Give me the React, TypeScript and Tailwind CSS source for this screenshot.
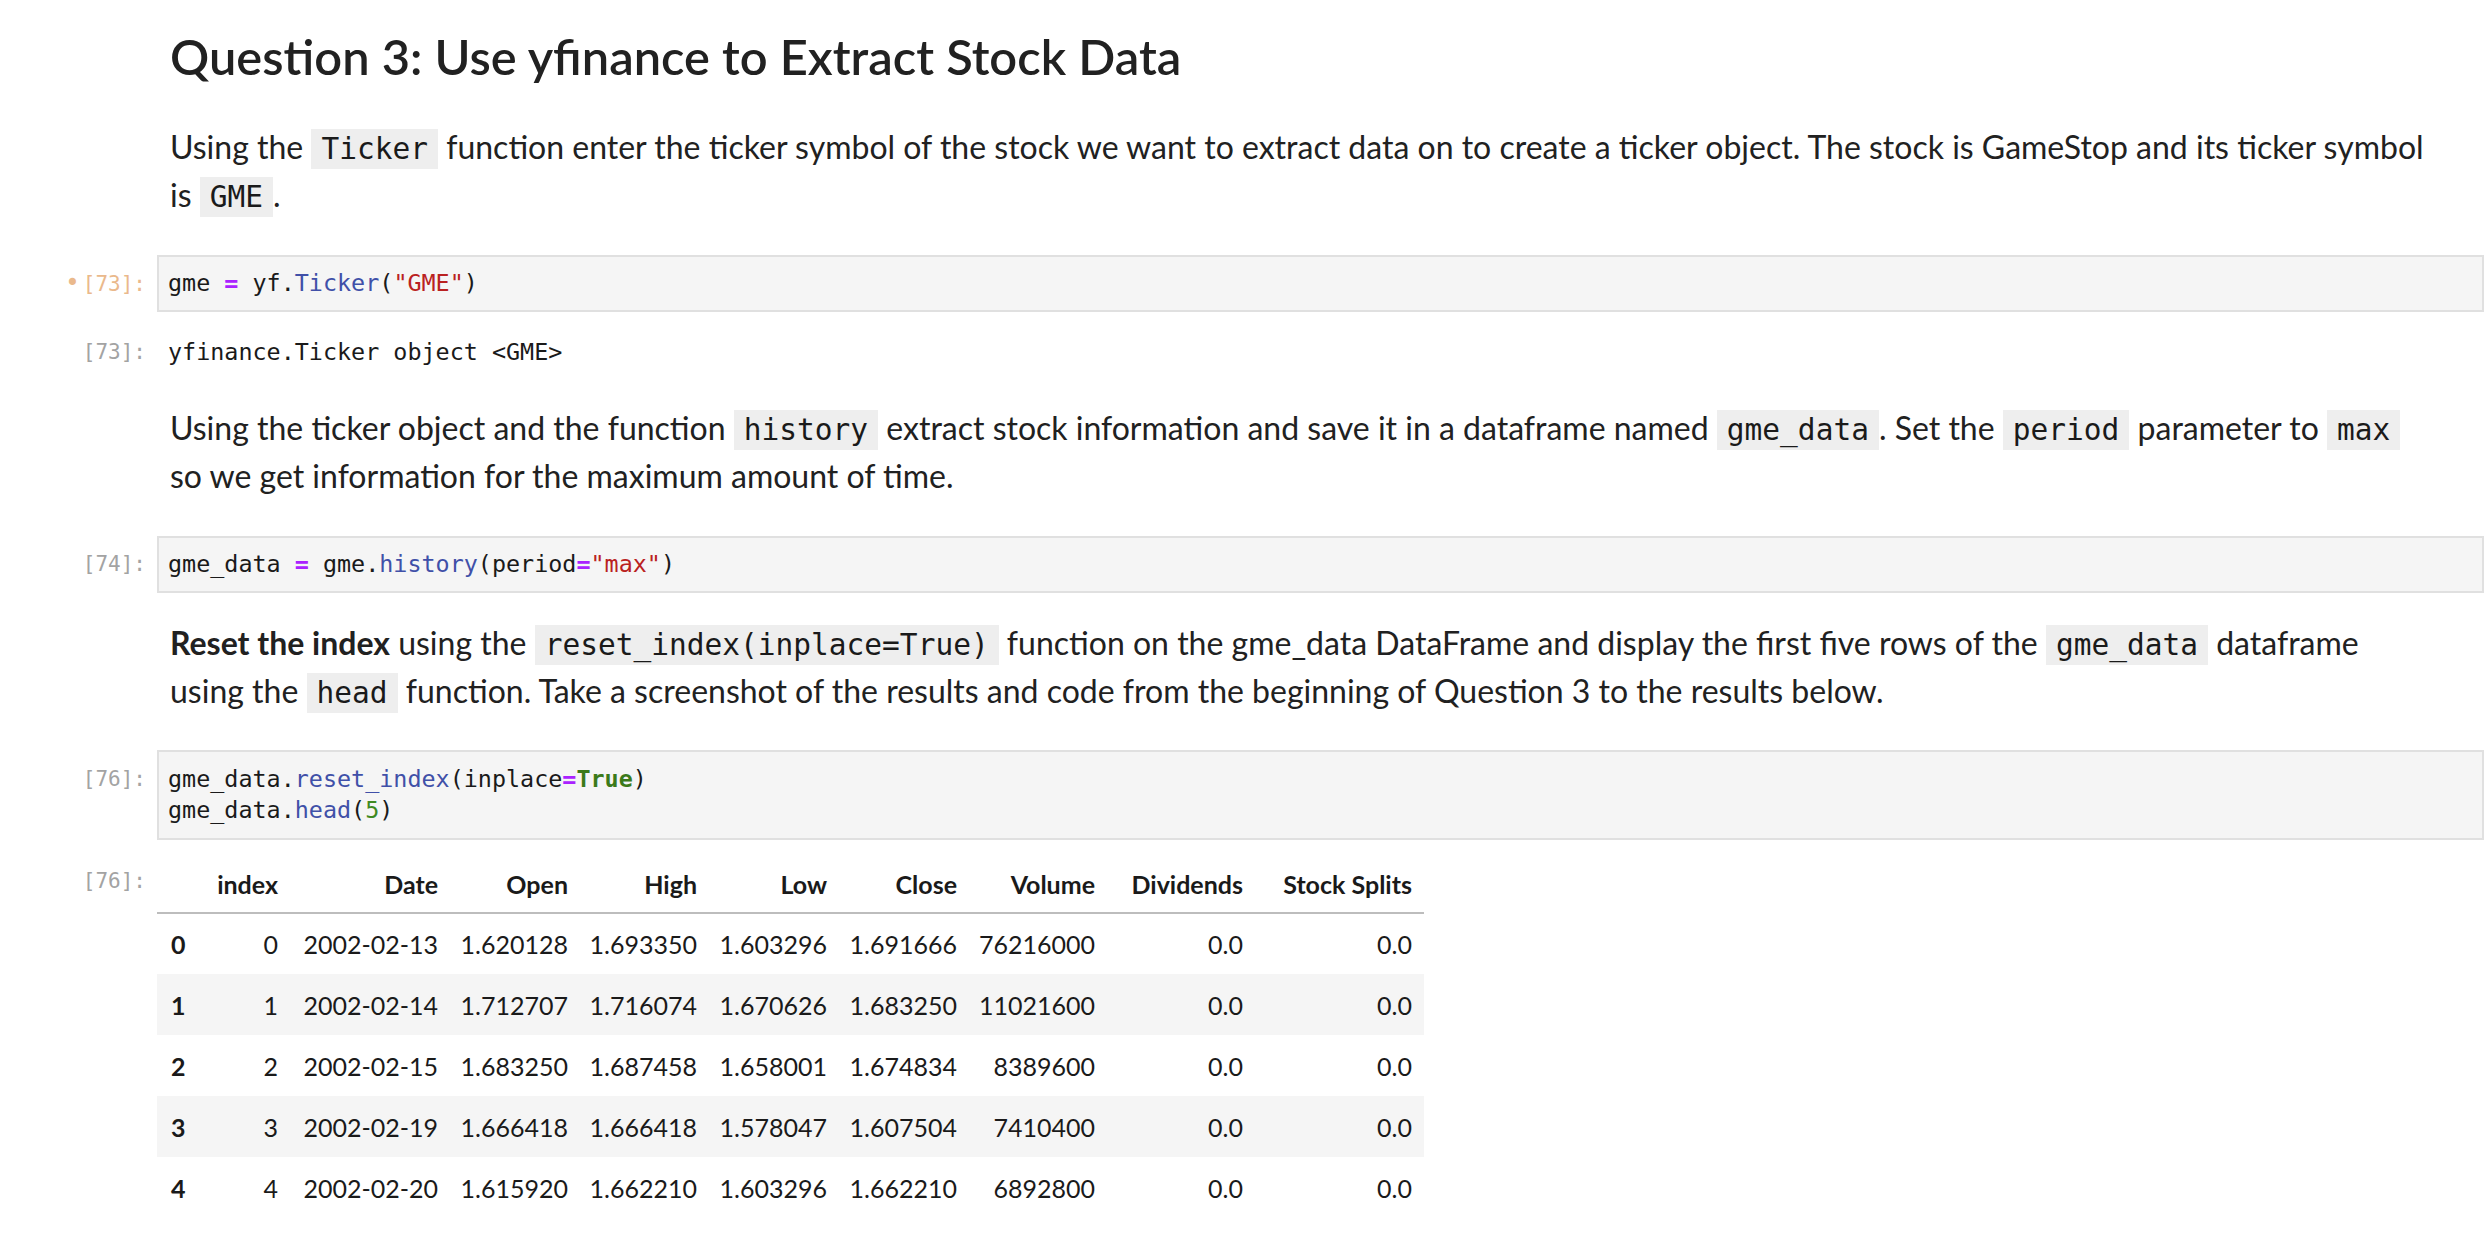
import { FC, ReactNode } from "react";

const mono = "font-['DejaVu_Sans_Mono',monospace]";

const Prompt: FC<{ n: number; dirty?: boolean; pt?: string }> = ({ n, dirty, pt }) => (
  <div
    className={`w-[157px] shrink-0 pr-[11px] text-right ${mono} text-[21px] leading-[31px] ${
      dirty ? "text-[#eab98c]" : "text-[#a3a3a3]"
    } ${pt ?? "pt-[13px]"}`}
  >
    {dirty && <span className="mr-[3px] text-[24px]">•</span>}[{n}]:
  </div>
);

const CodeCell: FC<{ n: number; dirty?: boolean; children: ReactNode; className?: string; py?: string }> = ({
  n,
  dirty,
  children,
  className,
  py,
}) => (
  <div className={`flex ${className ?? ""}`}>
    <Prompt n={n} dirty={dirty} pt={py === "py-[12px]" ? "pt-[14px]" : undefined} />
    <div
      className={`flex-1 mr-[6px] border-2 border-[#e0e0e0] bg-[#f5f5f5] pl-[9px] ${py ?? "py-[11px]"} ${mono} text-[23.4px] leading-[31px] text-[#1a1a1a] whitespace-pre`}
    >
      {children}
    </div>
  </div>
);

const C: FC<{ children: ReactNode }> = ({ children }) => (
  <code className={`bg-[#eeeeee] px-[10px] py-[3px] ${mono} text-[29.5px] leading-[30px] text-[#1a1a1a]`}>
    {children}
  </code>
);

// syntax colours
const Op: FC<{ children: ReactNode }> = ({ children }) => <span className="text-[#aa22ff] font-bold">{children}</span>;
const Prop: FC<{ children: ReactNode }> = ({ children }) => <span className="text-[#4050a8]">{children}</span>;
const Str: FC<{ children: ReactNode }> = ({ children }) => <span className="text-[#ba2121]">{children}</span>;
const Kw: FC<{ children: ReactNode }> = ({ children }) => <span className="text-[#3b7a1a] font-bold">{children}</span>;
const Num: FC<{ children: ReactNode }> = ({ children }) => <span className="text-[#3f8a22]">{children}</span>;

const rows = [
  ["0", "0", "2002-02-13", "1.620128", "1.693350", "1.603296", "1.691666", "76216000", "0.0", "0.0"],
  ["1", "1", "2002-02-14", "1.712707", "1.716074", "1.670626", "1.683250", "11021600", "0.0", "0.0"],
  ["2", "2", "2002-02-15", "1.683250", "1.687458", "1.658001", "1.674834", "8389600", "0.0", "0.0"],
  ["3", "3", "2002-02-19", "1.666418", "1.666418", "1.578047", "1.607504", "7410400", "0.0", "0.0"],
  ["4", "4", "2002-02-20", "1.615920", "1.662210", "1.603296", "1.662210", "6892800", "0.0", "0.0"],
];

const headers = ["index", "Date", "Open", "High", "Low", "Close", "Volume", "Dividends", "Stock Splits"];
const widths = ["w-[73px]", "w-[160px]", "w-[130px]", "w-[129px]", "w-[130px]", "w-[130px]", "w-[138px]", "w-[148px]", "w-[169px]"];

const App: FC = () => {
  return (
    <div className="w-[2490px] min-h-[1240px] bg-white pt-[28px] font-['Lato',sans-serif] text-[#212121] overflow-hidden">
      {/* Markdown: heading + intro */}
      <div className="pl-[170px] pr-[50px]">
        <h2 className="text-[48.8px] leading-[56px] font-semibold">Question 3: Use yfinance to Extract Stock Data</h2>
        <p className="mt-[39px] text-[32px] leading-[48px]">
          Using the <C>Ticker</C> function enter the ticker symbol of the stock we want to extract data on to create a
          ticker object. The stock is GameStop and its ticker symbol is <C>GME</C>.
        </p>
      </div>

      <CodeCell n={73} dirty className="mt-[36px]">
        gme <Op>=</Op> yf.<Prop>Ticker</Prop>(<Str>"GME"</Str>)
      </CodeCell>

      {/* output 73 */}
      <div className="flex mt-[25px]">
        <Prompt n={73} pt="pt-0" />
        <div className={`pl-[11px] ${mono} text-[23.4px] leading-[31px] text-[#1a1a1a]`}>
          yfinance.Ticker object &lt;GME&gt;
        </div>
      </div>

      <div className="pl-[170px] pr-[50px] mt-[36px]">
        <p className="text-[32px] leading-[48px]">
          Using the ticker object and the function <C>history</C> extract stock information and save it in a dataframe
          named <C>gme_data</C>. Set the <C>period</C> parameter to <C>max</C> so we get information for the maximum
          amount of time.
        </p>
      </div>

      <CodeCell n={74} className="mt-[36px]">
        gme_data <Op>=</Op> gme.<Prop>history</Prop>(period<Op>=</Op>
        <Str>"max"</Str>)
      </CodeCell>

      <div className="pl-[170px] pr-[50px] mt-[26px]">
        <p className="text-[32px] leading-[48px]">
          <strong className="font-bold">Reset the index</strong> using the <C>reset_index(inplace=True)</C> function on
          the gme_data DataFrame and display the first five rows of the <C>gme_data</C> dataframe using the{" "}
          <C>head</C> function. Take a screenshot of the results and code from the beginning of Question 3 to the
          results below.
        </p>
      </div>

      <CodeCell n={76} className="mt-[35px]" py="py-[12px]">
        {"gme_data."}
        <Prop>reset_index</Prop>(inplace<Op>=</Op>
        <Kw>True</Kw>)
        {"\n"}
        {"gme_data."}
        <Prop>head</Prop>(<Num>5</Num>)
      </CodeCell>

      {/* output 76: dataframe */}
      <div className="flex mt-[16px]">
        <Prompt n={76} pt="pt-[10px]" />
        <table className="table-fixed w-[1267px] border-collapse text-[25px] leading-[34px] text-[#1a1a1a]">
          <thead>
            <tr className="border-b-2 border-[#bdbdbd]">
              <th className="w-[60px] h-[57px]" />
              {headers.map((h, i) => (
                <th key={h} className={`${widths[i]} h-[57px] pr-[12px] text-right font-bold whitespace-nowrap`}>
                  {h}
                </th>
              ))}
            </tr>
          </thead>
          <tbody>
            {rows.map((r, ri) => (
              <tr key={ri} className={ri % 2 === 1 ? "bg-[#f5f5f5]" : "bg-white"}>
                <th className="h-[61px] pl-[14px] text-left font-bold">{r[0]}</th>
                {r.slice(1).map((v, ci) => (
                  <td key={ci} className="h-[61px] pr-[12px] text-right whitespace-nowrap">
                    {v}
                  </td>
                ))}
              </tr>
            ))}
          </tbody>
        </table>
      </div>
    </div>
  );
};

export default App;
